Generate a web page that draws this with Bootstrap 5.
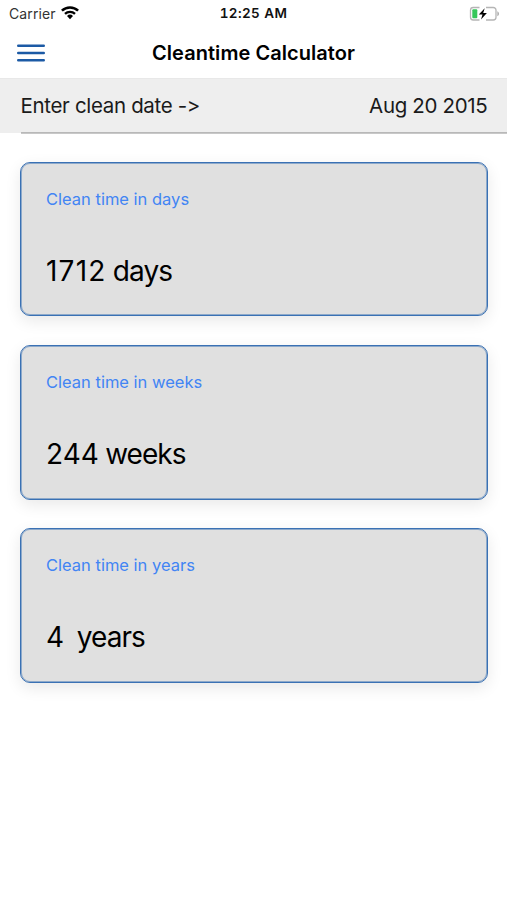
<!DOCTYPE html>
<html lang="en">
<head>
<meta charset="utf-8">
<meta name="viewport" content="width=device-width, initial-scale=1">
<title>Cleantime Calculator</title>
<link href="https://cdn.jsdelivr.net/npm/bootstrap@5.3.0/dist/css/bootstrap.min.css" rel="stylesheet">
<style>
body{font-family:Inter,"Liberation Sans",sans-serif;font-feature-settings:"calt" 0;color:#000;min-height:900px;overflow:hidden}
.status{height:27px;font-size:14px;line-height:27px;padding:0 7px 0 9px}
.status>*{flex:1 1 0}
.carrier{color:#333;letter-spacing:.1px}
.clock{font-size:13.5px;font-weight:600;letter-spacing:.4px;color:#111;padding-right:2px;font-feature-settings:"tnum" 1,"calt" 0}
.topbar{height:51px;padding:0 17px}
.topbar h1{font-size:20px;font-weight:600;letter-spacing:.05px;line-height:48px}
.burger{width:28px}
.date-row{height:55px;background:#eee;font-size:20.5px;letter-spacing:-.33px;line-height:53px;color:#1a1a1a;padding-left:20.5px;border-top:1px solid #e8e8e8}
.date-inner{height:55px;padding-right:19.5px;border-bottom:1px solid #c8c8c8;box-shadow:inset 0 -1px #b8b8b8}
.cards{padding:29px 19px 0 20px;gap:28.8px}
.time-card{height:154.4px;background:#e0e0e0;border:1px solid #3a71b4;border-radius:10px;box-shadow:inset 0 0 0 1px rgba(58,113,180,.5),0 5px 16px rgba(0,0,0,.09);padding:24px 25px}
.time-label{font-size:16.5px;line-height:24px;color:#4285f4}
.time-value{font-size:28px;line-height:36px;margin-top:42px;white-space:pre;letter-spacing:-.95px;word-spacing:-.6px}
.amount{letter-spacing:0}
.amount-days{letter-spacing:1.2px}
</style>
</head>
<body class="bg-white">
<div class="status d-flex align-items-center">
  <div class="d-flex align-items-center gap-1"><span class="carrier">Carrier</span>
    <svg width="20" height="15" viewBox="0 0 20 15" fill="none" stroke="#000"><path d="M1.900 4.700a11.600 11.600 0 0 1 16.200 0" stroke-width="2.500"/><path d="M5 7.900a7.100 7.100 0 0 1 10 0" stroke-width="2.300"/><path d="M7 10a4.300 4.300 0 0 1 6 0L10 13.200z" fill="#000" stroke="none"/></svg>
  </div>
  <div class="clock text-center"><span>12:25 AM</span></div>
  <div class="d-flex justify-content-end">
    <svg width="31" height="16" viewBox="0 0 31 16"><path d="M10.500 1.500H4.200a2.700 2.700 0 0 0-2.700 2.700v7.100A2.700 2.700 0 0 0 4.200 14h6.300M17 1.500h7.300A2.700 2.700 0 0 1 27 4.200v7.100a2.700 2.700 0 0 1-2.700 2.700H17" fill="none" stroke="#b5b5b5" stroke-width="1.300"/><path d="M28.300 5.300c2.300.8 2.300 4.200 0 5z" fill="#b0b0b0"/><rect x="3.300" y="3.300" width="5" height="9" rx="1" fill="#35c759"/><path d="M15.700 2.200 9.800 8.500h3.700l-1.500 5 5.900-6.400h-3.700z" fill="#000"/></svg>
  </div>
</div>
<header class="topbar d-flex align-items-center">
  <svg class="burger" height="20" viewBox="0 0 28 20" stroke="#1c5aa5" stroke-width="2.400" stroke-linecap="round"><path d="M1.200 2.800h25.600M1.200 10h25.600M1.200 17.200h25.600"/></svg>
  <h1 class="flex-grow-1 text-center m-0">Cleantime Calculator</h1>
  <div class="burger"></div>
</header>
<div class="date-row">
  <div class="date-inner d-flex justify-content-between"><span>Enter clean date -&gt;</span><span>Aug 20 2015</span></div>
</div>
<main class="cards d-flex flex-column">
  <section class="time-card"><div class="time-label">Clean time in days</div><div class="time-value"><span class="amount amount-days">1712</span> days</div></section>
  <section class="time-card"><div class="time-label">Clean time in weeks</div><div class="time-value"><span class="amount">244</span> weeks</div></section>
  <section class="time-card"><div class="time-label">Clean time in years</div><div class="time-value"><span class="amount">4</span>  years</div></section>
</main>
<script src="https://cdn.jsdelivr.net/npm/bootstrap@5.3.0/dist/js/bootstrap.bundle.min.js"></script>
</body>
</html>
